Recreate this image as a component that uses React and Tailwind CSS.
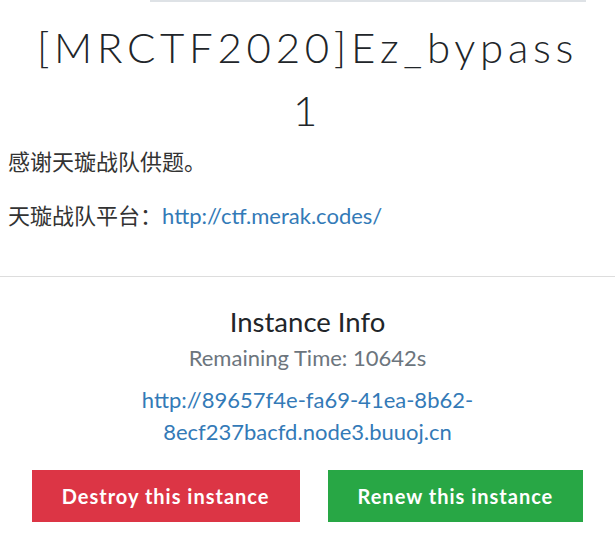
export default function App() {
  return (
    <div className="w-[615px] h-[537px] overflow-hidden bg-white font-['Lato','Noto_Sans_CJK_SC',sans-serif] text-[#212529]">
      <div className="ml-[150px] w-[436px] border-t-2 border-[#dee2e6]" />

      <h1 className="mt-[14px] text-center text-[42px] font-light leading-[63px] tracking-[4.7px] text-[#212529]">
        [MRCTF2020]Ez_bypass
        <br />1
      </h1>

      <div className="mt-[3px] px-[8px] text-[22px] leading-[33px] text-[#333]">
        <p className="mb-[21px]">感谢天璇战队供题。</p>
        <p>
          天璇战队平台：
          <a href="#" className="text-[#337ab7]">
            http://ctf.merak.codes/
          </a>
        </p>
      </div>

      <hr className="mt-[44px] border-t border-[#ddd]" />

      <div className="mt-[28px] flex flex-col items-center text-center">
        <h4 className="text-[27.5px] leading-[33px]">Instance Info</h4>
        <p className="mt-[3px] text-[22px] leading-[33px] text-[#6c757d]">
          Remaining Time: 10642s
        </p>
        <a
          href="#"
          className="mt-[10px] w-[380px] text-[22px] leading-[32px] text-[#337ab7]"
        >
          http://89657f4e-fa69-41ea-8b62-
          <br />
          8ecf237bacfd.node3.buuoj.cn
        </a>
        <div className="mt-[22px] flex gap-[28px]">
          <button className="h-[52px] px-[30px] bg-[#dc3545] text-white text-[20px] font-bold tracking-[1px]">
            Destroy this instance
          </button>
          <button className="h-[52px] px-[30px] bg-[#28a745] text-white text-[20px] font-bold tracking-[1px]">
            Renew this instance
          </button>
        </div>
      </div>
    </div>
  );
}
